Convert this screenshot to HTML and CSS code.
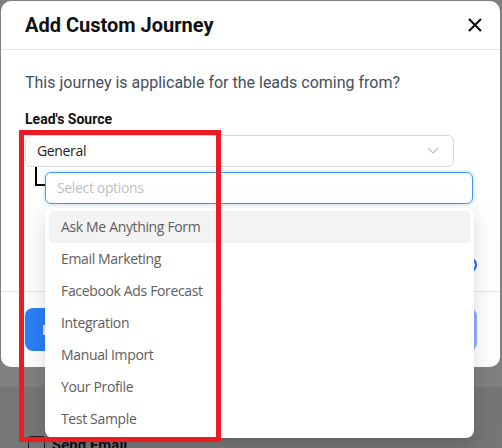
FILE: index.html
```html
<!DOCTYPE html>
<html lang="en">
<head>
    <meta charset="UTF-8">
    <title>Add Custom Journey</title>
    <link rel="stylesheet" href="styles.css">
</head>
<body>
    <!-- page behind the overlay -->
    <div class="page">
        <div class="page-top"></div>
        <div class="page-band">
            <div class="page-row">
                <span class="check"></span>
                <span class="page-label">Send Email</span>
            </div>
        </div>
    </div>

    <div class="modal">
        <div class="modal-head">
            <h2 class="modal-title">Add Custom Journey</h2>
            <button class="close" type="button">
                <svg width="16" height="16" viewBox="0 0 16 16"><path d="M2 2 L14 14 M14 2 L2 14" stroke="#111" stroke-width="2.2" fill="none"/></svg>
            </button>
        </div>

        <div class="modal-body">
            <p class="intro">This journey is applicable for the leads coming from?</p>
            <label class="field-label">Lead's Source</label>
            <div class="select">
                <span>General</span>
                <svg class="chevron" width="12" height="7" viewBox="0 0 12 7"><path d="M1 1 L6 6 L11 1" stroke="#bdbdbd" stroke-width="1.2" fill="none"/></svg>
            </div>
            <div class="sub">
                <span class="connector"></span>
                <div class="search">Select options</div>
            </div>
            <div class="toggle-row"><span class="ring"></span></div>
        </div>

        <div class="modal-foot">
            <button class="btn btn-primary" type="button"><span class="btn-icon"></span></button>
            <button class="btn btn-light" type="button"></button>
        </div>

        <!-- open dropdown -->
        <div class="menu">
            <div class="menu-item active">Ask Me Anything Form</div>
            <div class="menu-item">Email Marketing</div>
            <div class="menu-item">Facebook Ads Forecast</div>
            <div class="menu-item">Integration</div>
            <div class="menu-item">Manual Import</div>
            <div class="menu-item">Your Profile</div>
            <div class="menu-item">Test Sample</div>
        </div>
    </div>

    <div class="annot"></div>
</body>
</html>
```

FILE: styles.css
```css
body {
margin: 0;
width: 502px;
height: 448px;
overflow: hidden;
position: relative;
background-color: #7a7a7a;
font-family: Roboto, "Liberation Sans", Arial, sans-serif;
}

.page-top {
height: 387px;
background-color: #808080;
}
.page-band {
height: 61px;
background-color: #767676;
display: flex;
flex-direction: column;
justify-content: flex-end;
}
.page-row {
display: flex;
align-items: flex-start;
gap: 7px;
padding-left: 28px;
height: 12px;
}
.check {
width: 15px;
height: 15px;
border: 1px solid #222;
border-radius: 2px;
}
.page-label {
font-weight: 700;
font-size: 15px;
line-height: 18px;
color: #111;
}

.modal {
position: absolute;
top: 1px;
left: 1px;
width: 499px;
height: 366px;
background-color: #fff;
border-radius: 10px;
}

.modal-head {
height: 48px;
border-bottom: 1px solid #e6e6e6;
padding: 0 17px 0 24px;
display: flex;
align-items: center;
justify-content: space-between;
}
.modal-title {
margin: 0;
font-size: 20px;
font-weight: 700;
color: #111;
}
.close {
border: none;
background: none;
padding: 0;
width: 16px;
height: 16px;
display: flex;
}

.modal-body {
padding: 22px 24px 18px;
}
.intro {
margin: 0 0 16px;
font-size: 16px;
line-height: 22px;
color: #44505e;
}
.field-label {
display: block;
font-size: 14px;
font-weight: 700;
line-height: 18px;
color: #111;
margin-bottom: 7px;
}

.select {
box-sizing: border-box;
width: 429px;
height: 32px;
border: 1px solid #d9d9d9;
border-radius: 6px;
padding: 0 14px 2px 11px;
display: flex;
align-items: center;
justify-content: space-between;
font-family: "Open Sans", "Noto Sans", sans-serif;
font-size: 14px;
letter-spacing: -0.35px;
color: #222;
}

.sub {
display: flex;
align-items: flex-start;
margin-top: 5px;
padding-left: 10px;
}
.connector {
width: 8px;
height: 17px;
margin-top: -5px;
border-left: 2px solid #000;
border-bottom: 2px solid #000;
}
.search {
box-sizing: border-box;
width: 428px;
height: 32px;
border: 1px solid #4096ff;
border-radius: 6px;
box-shadow: 0 0 0 2px rgba(5, 145, 255, 0.1);
padding: 0 11px 1px;
display: flex;
align-items: center;
font-family: "Open Sans", "Noto Sans", sans-serif;
font-size: 14px;
letter-spacing: -0.35px;
color: #bfbfbf;
}

.toggle-row {
display: flex;
justify-content: flex-end;
margin-top: 53px;
margin-right: -1px;
}
.ring {
box-sizing: border-box;
width: 16px;
height: 16px;
border: 2.5px solid #1d6ff2;
border-radius: 50%;
}

.modal-foot {
border-top: 1px solid #e6e6e6;
padding: 16px 23px 16px 24px;
display: flex;
justify-content: space-between;
}
.btn {
height: 43px;
border: none;
border-radius: 8px;
}
.btn-primary {
width: 180px;
background-color: #2b7ff8;
padding: 0 0 0 18px;
display: flex;
align-items: center;
}
.btn-icon {
width: 2px;
height: 10px;
background-color: #e8e4f4;
}
.btn-light {
width: 150px;
background-color: #8db5f6;
}

.menu {
position: absolute;
top: 207px;
left: 44px;
width: 429px;
box-sizing: border-box;
padding: 3px 4px;
background-color: #fff;
border-radius: 8px;
box-shadow: 0 6px 16px 0 rgba(0, 0, 0, 0.08), 0 3px 6px -4px rgba(0, 0, 0, 0.12), 0 9px 28px 8px rgba(0, 0, 0, 0.05);
}
.menu-item {
box-sizing: border-box;
height: 32px;
padding: 0 12px 2px;
display: flex;
align-items: center;
border-radius: 4px;
font-family: "Open Sans", "Noto Sans", sans-serif;
font-size: 14px;
letter-spacing: -0.35px;
color: #5e5e5e;
}
.menu-item.active {
background-color: #f3f3f3;
}

.annot {
position: absolute;
left: 19px;
top: 130px;
width: 202px;
height: 312px;
box-sizing: border-box;
border: 5px solid #ed1c24;
}
```
